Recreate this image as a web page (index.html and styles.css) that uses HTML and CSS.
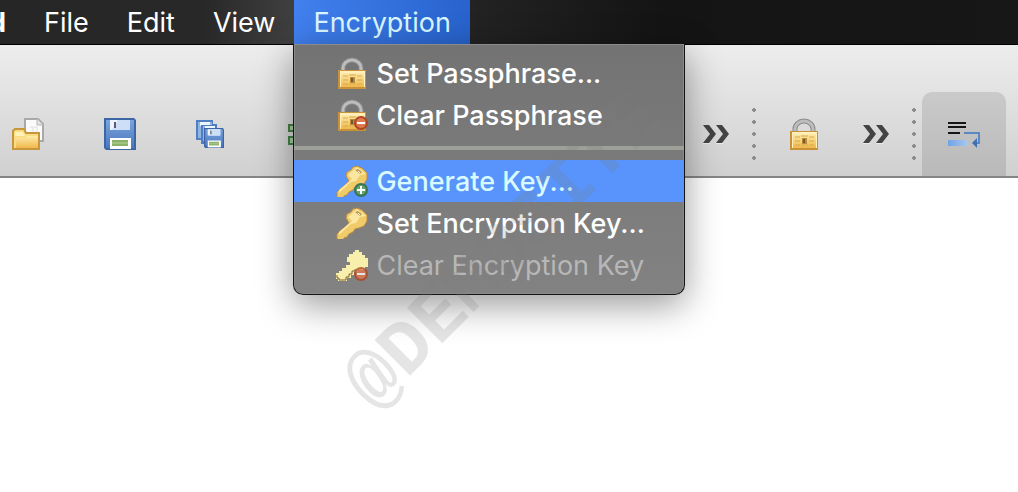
FILE: index.html
```
<!DOCTYPE html>
<html lang="en">
<head>
  <meta charset="UTF-8">
  <meta name="viewport" content="width=device-width, initial-scale=1.0">
  <title>Encryption</title>
  <link rel="stylesheet" href="styles.css">
</head>
<body>
  <!-- Shared icon shapes -->
  <svg class="defs" width="0" height="0" aria-hidden="true">
    <defs>
      <linearGradient id="gold" x1="0" y1="0" x2="0" y2="1">
        <stop offset="0" stop-color="#fdeaa8"/>
        <stop offset="1" stop-color="#efb94a"/>
      </linearGradient>
      <linearGradient id="blue" x1="0" y1="0" x2="0" y2="1">
        <stop offset="0" stop-color="#7ba4dc"/>
        <stop offset="1" stop-color="#4a78c0"/>
      </linearGradient>
      <linearGradient id="line" x1="0" y1="0" x2="1" y2="0">
        <stop offset="0" stop-color="#6fa3e6"/>
        <stop offset="1" stop-color="#a9c8ee"/>
      </linearGradient>
      <symbol id="lock" viewBox="0 0 32 32">
        <path d="M7 15v-4a9 8 0 0 1 18 0v4" fill="none" stroke="#8b8b8b" stroke-width="5"/>
        <path d="M7 15v-4a9 8 0 0 1 18 0v4" fill="none" stroke="#bdbdbd" stroke-width="3"/>
        <rect x="2" y="13" width="28" height="19" fill="#c99238"/>
        <rect x="4" y="14" width="25" height="16" fill="#fff0bd"/>
        <rect x="5" y="16" width="23" height="14" fill="url(#gold)"/>
        <path d="M7 19h5M7 23h5M7 27h5M21 19h5M21 23h5M21 27h5M13 18h7M13 27h7" stroke="#d6a850" stroke-width="1" fill="none"/>
        <rect x="14" y="20" width="5" height="6" fill="#b98a38"/>
        <rect x="15" y="21" width="2" height="4" fill="#6f5a34"/>
      </symbol>
      <symbol id="key" viewBox="0 0 32 32">
        <path d="M10 11l1-4 4-2 2-3 4-1 5 2 5 5v6l-3 5-5 2-4 1-2 3-4 2-2 3-3 1-1 3-3 1H1v-8l4-4 3-2 3-3 2-2z" fill="#f0cb6a" stroke="#b98b45" stroke-width="1" stroke-linejoin="bevel"/>
        <path d="M12 10l9-8 9 7-6 1-4 6-5 1L3 28v-3l13-11z" fill="#fbe7a2"/>
        <path d="M19 5l3-1 4 3-2 2z" fill="#c49a52"/>
        <path d="M22 6l2 2" stroke="#fff" stroke-width="1"/>
      </symbol>
      <symbol id="minus" viewBox="0 0 14 14">
        <circle cx="7" cy="7" r="7" fill="#ad4822"/>
        <circle cx="7" cy="7" r="5" fill="#df7950"/>
        <rect x="3" y="6" width="8" height="2" fill="#fff"/>
      </symbol>
      <symbol id="floppy" viewBox="0 0 32 32">
        <path d="M0 0h30l2 2v30H2l-2-2z" fill="#3d66a4"/>
        <path d="M2 2h28v28H2z" fill="url(#blue)"/>
        <path d="M6 2h20v10H6z" fill="#eef5ff"/>
        <path d="M14 2h12v10H8z" fill="#cddff7"/>
        <rect x="10" y="4" width="2" height="6" fill="#555f70"/>
        <rect x="6" y="20" width="21" height="11" fill="#fff"/>
        <rect x="8" y="22" width="16" height="6" fill="#8db36b"/>
        <path d="M8 25h16" stroke="#b7d39c" stroke-width="1"/>
      </symbol>
      <symbol id="more" viewBox="0 0 28 20">
        <path d="M1 1h6l7 9-7 9H1l7-9zM14 1h6l7 9-7 9h-6l7-9z" fill="#444"/>
        <path d="M1 20h7M14 20h7" stroke="#fff" stroke-width="1"/>
      </symbol>
    </defs>
  </svg>

  <nav class="menubar">
    <button class="app-name">d</button>
    <button>File</button>
    <button>Edit</button>
    <button>View</button>
    <div class="menu-wrap">
      <button class="active">Encryption</button>
      <div class="menu">
        <button><svg class="icon"><use href="#lock"/></svg>Set Passphrase...</button>
        <button>
          <svg class="icon" viewBox="0 0 32 32">
            <use href="#lock" width="32" height="32"/>
            <use href="#minus" x="18" y="17" width="14" height="14"/>
          </svg>Clear Passphrase
        </button>
        <hr>
        <button class="selected">
          <svg class="icon" viewBox="0 0 32 32">
            <use href="#key" width="32" height="32"/>
            <circle cx="25" cy="25" r="7" fill="#397350"/>
            <circle cx="25" cy="25" r="5" fill="#62a36c"/>
            <path d="M25 21v8M21 25h8" stroke="#fff" stroke-width="2"/>
          </svg>Generate Key...
        </button>
        <button><svg class="icon"><use href="#key"/></svg>Set Encryption Key...</button>
        <button disabled>
          <svg class="icon" viewBox="0 0 32 32">
            <path d="M11 8h2V5h4V3h2V1h4v2h3v3h3v3h3v9h-3v3h-7v2h-4v3h-3v3h-4v3H2v-2H0v-6h3v-2h3v-3h4v-3h4v-3h-3z" fill="#f9efad"/>
            <path d="M1 26v3h2v2h7v-3h3v-3h3v-3h3v-2" fill="none" stroke="#7b6131" stroke-width="1"/>
            <use href="#minus" x="18" y="18" width="14" height="14" opacity=".8"/>
          </svg>Clear Encryption Key
        </button>
      </div>
    </div>
  </nav>

  <header class="toolbar">
    <div class="tools">
      <button aria-label="Open">
        <svg class="icon" viewBox="0 0 32 32">
          <path d="M13 1h13l5 5v17H13z" fill="#fbfbfb" stroke="#a9a9a9" stroke-width="2"/>
          <path d="M25 1v6h6" fill="#e4e4e4" stroke="#b5b5b5" stroke-width="1"/>
          <path d="M18 9h3v6M22 9h3v6" stroke="#ddd" fill="none"/>
          <path d="M1 31V13l2-2h9l2 4h13v16z" fill="#f9dd82" stroke="#c8973c" stroke-width="2"/>
          <path d="M3 14h8l2 4H3z" fill="#fff2b8"/>
          <path d="M4 30V20h9l2-2h11v12z" fill="url(#gold)"/>
        </svg>
      </button>
      <button aria-label="Save"><svg class="icon"><use href="#floppy"/></svg></button>
      <button aria-label="Save all">
        <svg class="icon" viewBox="0 0 32 32">
          <path d="M0 2h17v4h4v4h6v19H9v-3H5v-4H0z" fill="#4f7fc1"/>
          <path d="M2 4h14v16H2z" fill="#91b4e2"/>
          <path d="M4 4h10v4H4z" fill="#eef5ff"/>
          <path d="M5 7h14v17H5z" fill="#4f7fc1"/>
          <path d="M7 8h12v15H7z" fill="#91b4e2"/>
          <path d="M9 8h10v3H9z" fill="#eef5ff"/>
          <use href="#floppy" x="8" y="10" width="20" height="20"/>
        </svg>
      </button>
      <button aria-label="Toggle grid">
        <svg class="icon" viewBox="0 0 32 32">
          <path d="M1 7h8v6H1zM1 19h8v7H1zM14 7h16v6H14zM14 19h16v7H14z" fill="#a8cfa2" stroke="#468148" stroke-width="2"/>
        </svg>
      </button>
    </div>
    <div class="tools right">
      <button aria-label="More tools"><svg class="more"><use href="#more"/></svg></button>
      <span class="grip"></span>
      <button class="lock" aria-label="Encrypt"><svg class="icon"><use href="#lock"/></svg></button>
      <button aria-label="More options"><svg class="more"><use href="#more"/></svg></button>
      <span class="grip"></span>
      <button class="wrap" aria-label="Word wrap">
        <svg class="icon" viewBox="0 0 32 32">
          <path d="M0 5h18M0 9h18M0 15h12" stroke="#161616" stroke-width="2"/>
          <rect y="22" width="20" height="6" fill="url(#line)"/>
          <path d="M16 15h15v10h-4" fill="none" stroke="#5988c6" stroke-width="2"/>
          <path d="M24 25l5-5v10z" fill="#3f70b5"/>
        </svg>
      </button>
    </div>
  </header>

  <main class="page">
    <div class="watermark">@DEMOSITE</div>
  </main>
</body>
</html>
```

FILE: styles.css
```
* {
  margin: 0;
  padding: 0;
  box-sizing: border-box;
}

body {
  display: flex;
  flex-direction: column;
  min-height: 100vh;
  overflow: hidden;
  position: relative;
  background: #fff;
  font-family: Inter, Roboto, sans-serif;
  font-size: 27px;
}

button {
  border: none;
  background: none;
  color: inherit;
  font: inherit;
}

.defs {
  position: absolute;
}

.icon {
  display: block;
  flex: none;
  width: 32px;
  height: 32px;
}

.menubar {
  display: flex;
  height: 44px;
  background: linear-gradient(90deg, #262626, #282828 20%, #404040 29%, #222 47%, #141414 65%, #171717);
  color: #fff;
}

.menubar > button,
.menu-wrap > button {
  height: 44px;
  padding: 0 19px;
}

.menubar > .app-name {
  display: flex;
  justify-content: flex-end;
  align-items: center;
  width: 25px;
  padding-left: 0;
  overflow: hidden;
  font-weight: 700;
}

.menu-wrap {
  position: relative;
}

.menu-wrap > .active {
  background: linear-gradient(100deg, #4180ee, #2762cb);
  color: #d9f6ff;
}

.menu {
  position: absolute;
  z-index: 2;
  top: 44px;
  left: -1px;
  width: 392px;
  padding: 8px 0;
  border: 1px solid #151515;
  border-top: none;
  border-radius: 0 0 10px 10px;
  background: linear-gradient(#737373, #828282);
  box-shadow: inset 0 0 0 1px #8b8b8b, 0 10px 36px rgba(0, 0, 0, 0.4);
  font-weight: 500;
}

.menu button {
  display: flex;
  align-items: center;
  gap: 8px;
  width: 100%;
  height: 42px;
  padding-left: 42px;
  white-space: nowrap;
}

.menu .selected {
  background: #5894fb;
  color: #d9faff;
}

.menu button:disabled {
  color: #b7b7b7;
  font-weight: 400;
}

.menu hr {
  height: 4px;
  margin: 10px 0;
  border: none;
  background: #9da096;
}

.toolbar {
  display: flex;
  justify-content: space-between;
  height: 134px;
  padding: 47px 12px 0;
  border-top: 1px solid #000;
  border-bottom: 2px solid #858585;
  background: linear-gradient(#ededed, #d0d0d0);
}

.tools {
  display: flex;
  align-items: center;
  gap: 60px;
}

.right {
  gap: 22px;
}

.more {
  display: block;
  width: 28px;
  height: 20px;
}

.grip {
  width: 4px;
  height: 60px;
  background: radial-gradient(circle, #8c8c8c 2px, transparent 2px) 0 0 / 4px 12px;
}

.lock {
  margin: 0 20px 0 10px;
}

.wrap {
  display: flex;
  align-items: center;
  justify-content: center;
  width: 84px;
  height: 100%;
  margin-left: -16px;
  border-radius: 10px 10px 0 0;
  background: linear-gradient(#cacaca, #b9b9b9);
}

.page {
  flex: 1;
}

/* Diagonal stamp, drawn over the open menu */
.watermark {
  position: absolute;
  z-index: 3;
  left: 387px;
  bottom: 68px;
  color: rgba(125, 125, 125, 0.2);
  font: 700 76px/76px "Liberation Mono", monospace;
  transform: rotate(-45deg);
  transform-origin: 0 100%;
  pointer-events: none;
}
```
